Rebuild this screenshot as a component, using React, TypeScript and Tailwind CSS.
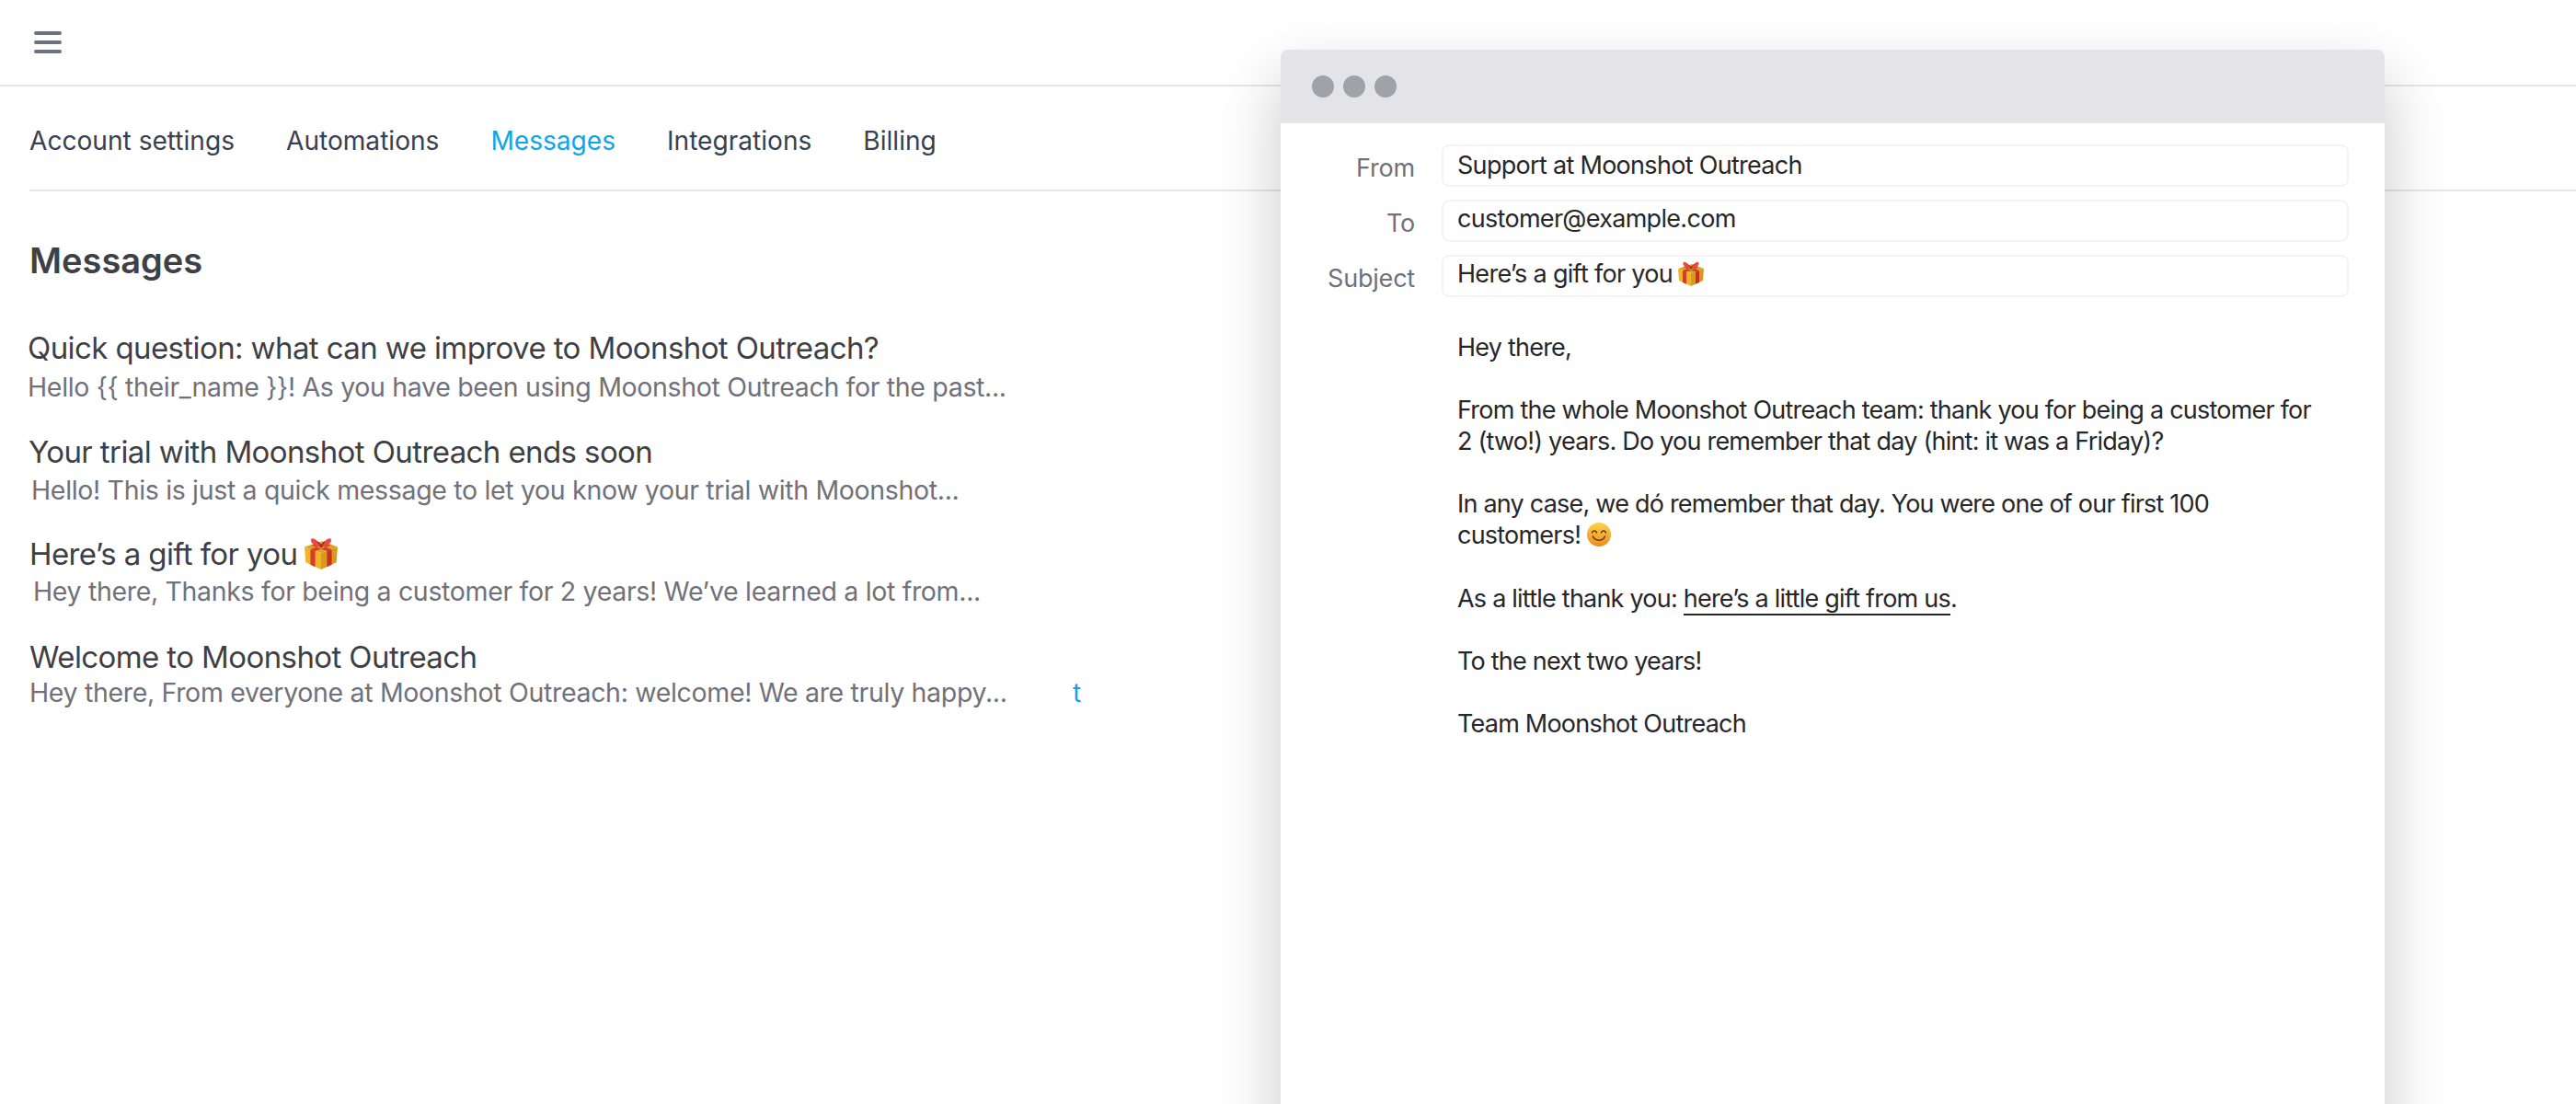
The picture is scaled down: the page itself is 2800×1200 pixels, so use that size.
import type { ReactNode } from "react";

const tabs = ["Account settings", "Automations", "Messages", "Integrations", "Billing"];

function GiftIcon({ className }: { className: string }) {
  return (
    <svg className={className} viewBox="0 0 28 28" aria-hidden="true">
      <path d="M0 9l14 5 14-5-13-5z" fill="#d9a326" />
      <path d="M0 9l14 5v14L1 22z" fill="#f0b429" />
      <path d="M28 9l-14 5v14l13-6z" fill="#d89a1e" />
      <path d="M5 11l4 1.400v13.400l-4-1.900z" fill="#d93a2b" />
      <path d="M23 11l-4 1.400v13.400l4-1.900z" fill="#c9301f" />
      <path d="M5 11l13-5 4 1.500-13 5zM23 11L10 6 6 7.500l13 5z" fill="#d93a2b" />
      <path d="M14 8C11 3 6 0 5.500 3 5 6 9 8.500 14 9c5-.5 9-3 8.500-6C22 0 17 3 14 8z" fill="#ea4a3f" />
      <path d="M11 4.500c1 1 2 2 3 3.500 1-1.500 2-2.500 3-3.500" fill="none" stroke="#a32218" strokeWidth="1" />
      <circle cx="14" cy="8" r="1.500" fill="#b32a1e" />
    </svg>
  );
}

function SmileIcon({ className }: { className: string }) {
  return (
    <svg className={className} viewBox="0 0 26 26" aria-hidden="true">
      <defs>
        <linearGradient id="smile-face" x1="0" y1="0" x2="0" y2="1">
          <stop offset="0" stopColor="#fcd34d" />
          <stop offset="1" stopColor="#f08a1c" />
        </linearGradient>
      </defs>
      <circle cx="13" cy="13" r="13" fill="url(#smile-face)" />
      <path d="M5.500 11c1-2.600 4-2.600 5 0M15.500 11c1-2.600 4-2.600 5 0" fill="none" stroke="#5b3a12" strokeWidth="1.500" strokeLinecap="round" />
      <path d="M6.500 15c2 5.500 11 5.500 13 0" fill="none" stroke="#5b3a12" strokeWidth="1.500" strokeLinecap="round" />
    </svg>
  );
}

function ListRow({
  title,
  preview,
  titleOffset,
  previewOffset,
  className,
}: {
  title: ReactNode;
  preview: string;
  titleOffset: string;
  previewOffset: string;
  className: string;
}) {
  return (
    <div className={className}>
      <div className={`flex h-[40px] items-center text-[33px] tracking-[-0.6px] text-[#3f3f46] ${titleOffset}`}>
        {title}
      </div>
      <div className={`flex h-[40px] items-center text-[28.500px] tracking-[-0.33px] text-[#71717a] ${previewOffset}`}>
        {preview}
      </div>
    </div>
  );
}

function Field({ label, children, textClass }: { label: string; children: ReactNode; textClass: string }) {
  return (
    <div className="flex h-[46px] items-center">
      <div className="w-[146px] pt-[6px] text-right text-[27px] tracking-[-0.2px] text-[#71717a]">{label}</div>
      <div className={`ml-[29px] flex h-[46px] flex-1 items-center rounded-[8px] border-2 border-[#f3f4f6] pl-[15px] text-[27px] tracking-[-0.7px] text-[#27272a] ${textClass}`}>
        {children}
      </div>
    </div>
  );
}

export default function App() {
  return (
    <div className="relative h-[1200px] w-[2800px] overflow-hidden bg-white font-['Inter',sans-serif]">
      <header className="flex h-[94px] items-start border-b-2 border-[#e5e5ea] pl-[37px] pt-[34px]">
        <div className="flex w-[30px] flex-col gap-[6px]">
          <span className="h-[4px] rounded-full bg-[#6b7280]" />
          <span className="h-[4px] rounded-full bg-[#6b7280]" />
          <span className="h-[4px] rounded-full bg-[#6b7280]" />
        </div>
      </header>

      <main className="pl-[32px]">
        <nav className="flex h-[114px] gap-[56px] border-b-2 border-[#e5e5ea] pt-[38px] text-[28.100px] text-[#374151]">
          {tabs.map((tab) => (
            <span className={tab === "Messages" ? "text-[#0ea5e9]" : ""} key={tab}>
              {tab}
            </span>
          ))}
        </nav>

        <h1 className="mt-[53px] text-[38px] leading-[44px] font-semibold text-[#3f3f46]">Messages</h1>

        <div className="relative mt-[54px] w-[1200px]">
          <ListRow
            className=""
            title="Quick question: what can we improve to Moonshot Outreach?"
            preview="Hello {{ their_name }}! As you have been using Moonshot Outreach for the past..."
            titleOffset="-ml-[2px]"
            previewOffset="-ml-[2px] mt-[2px]"
          />
          <ListRow
            className="mt-[31px]"
            title="Your trial with Moonshot Outreach ends soon"
            preview="Hello! This is just a quick message to let you know your trial with Moonshot..."
            titleOffset="-ml-[1px]"
            previewOffset="ml-[2px] mt-[1px]"
          />
          <ListRow
            className="mt-[30px]"
            title={
              <>
                Here’s a gift for you
                <GiftIcon className="mb-[4px] ml-[7px] h-[36px] w-[38px]" />
              </>
            }
            preview="Hey there, Thanks for being a customer for 2 years! We’ve learned a lot from..."
            titleOffset=""
            previewOffset="ml-[4px]"
          />
          <ListRow
            className="mt-[32px]"
            title="Welcome to Moonshot Outreach"
            preview="Hey there, From everyone at Moonshot Outreach: welcome! We are truly happy..."
            titleOffset=""
            previewOffset="-mt-[2px]"
          />
          <span className="absolute bottom-[0px] left-[1134px] text-[28px] leading-[40px] text-[#0ea5e9]">t</span>
        </div>
      </main>

      <section className="absolute left-[1392px] top-[54px] h-[1200px] w-[1200px] rounded-t-[8px] bg-white shadow-[0_30px_70px_rgba(0,0,0,0.22)]">
        <div className="flex h-[80px] items-center gap-[10px] rounded-t-[8px] bg-[#e4e4e8] pl-[34px]">
          <span className="size-[24px] rounded-full bg-[#a1a1aa]" />
          <span className="size-[24px] rounded-full bg-[#a1a1aa]" />
          <span className="size-[24px] rounded-full bg-[#a1a1aa]" />
        </div>

        <div className="flex flex-col gap-[14px] pr-[39px] pt-[23px]">
          <Field label="From" textClass="pb-[0px]">
            Support at Moonshot Outreach
          </Field>
          <Field label="To" textClass="pb-[3px]">
            customer@example.com
          </Field>
          <Field label="Subject" textClass="pb-[3px]">
            Here’s a gift for you
            <GiftIcon className="mb-[4px] ml-[6px] h-[28px] w-[28px]" />
          </Field>
        </div>

        <div className="pl-[192px] pt-[38px] text-[27px] leading-[34px] tracking-[-0.78px] text-[#27272a]">
          <p>Hey there,</p>
          <p className="mt-[34px]">
            From the whole Moonshot Outreach team: thank you for being a customer for
            <br />2 (two!) years. Do you remember that day (hint: it was a Friday)?
          </p>
          <p className="mt-[34px]">
            In any case, we dó remember that day. You were one of our first 100
            <br />
            customers! <SmileIcon className="mb-[6px] inline h-[26px] w-[26px]" />
          </p>
          <p className="mt-[34px]">
            As a little thank you: <span className="border-b-2 border-[#27272a]">here’s a little gift from us</span>.
          </p>
          <p className="mt-[34px]">To the next two years!</p>
          <p className="mt-[34px]">Team Moonshot Outreach</p>
        </div>
      </section>
    </div>
  );
}
